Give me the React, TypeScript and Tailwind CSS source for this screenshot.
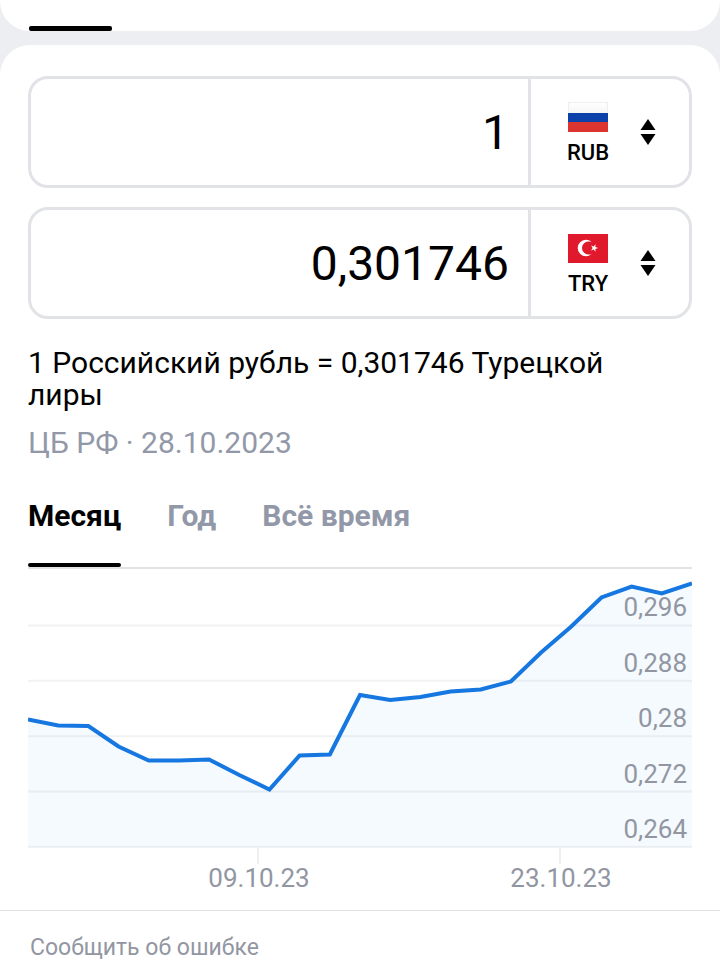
import { useState, type ReactNode } from "react";

const rates = [
  0.28242, 0.28155, 0.28148, 0.27852, 0.2765, 0.2765, 0.27664, 0.2744, 0.27231, 0.27722, 0.27736, 0.28596,
  0.28524, 0.28567, 0.28647, 0.28675, 0.28791, 0.2921, 0.29586, 0.30005, 0.30163, 0.30062, 0.30207,
];

const periods = ["Месяц", "Год", "Всё время"];

const gridValues = [0.296, 0.288, 0.28, 0.272, 0.264];

const dateTicks = [
  { x: 230, label: "09.10.23" },
  { x: 532, label: "23.10.23" },
];

const CHART_WIDTH = 664;
const CHART_BOTTOM = 278;

function rateToY(rate: number) {
  return CHART_BOTTOM - (rate - 0.264) * 6922;
}

function RussianFlag() {
  return (
    <svg viewBox="0 0 40 30" className="h-[30px] w-10" aria-hidden="true">
      <defs>
        <linearGradient id="ru-white" x1="0" y1="0" x2="0" y2="1">
          <stop offset="0" stopColor="#ffffff" />
          <stop offset="1" stopColor="#e4e6ea" />
        </linearGradient>
      </defs>
      <rect x="0.5" y="0.5" width="39" height="29" fill="url(#ru-white)" stroke="#eeeff1" />
      <rect y="11" width="40" height="9" fill="#0b41a8" />
      <rect y="20" width="40" height="10" fill="#dc352f" />
    </svg>
  );
}

function TurkishFlag() {
  return (
    <svg viewBox="0 0 40 30" className="h-[30px] w-10" aria-hidden="true">
      <rect y="1" width="40" height="29" fill="#e01a2c" />
      <path d="M23.6 9.1 A8.2 8.2 0 1 0 23.6 20.9 A6.6 6.6 0 1 1 23.6 9.1 Z" fill="#fff" />
      <path d="M30 15l-2.6 1 .1 2.8-1.8-2.2-2.6.8 1.5-2.4-1.5-2.4 2.6.8 1.8-2.2-.1 2.8z" fill="#fff" />
    </svg>
  );
}

function CurrencyRow({
  id,
  label,
  value,
  code,
  flag,
}: {
  id: string;
  label: string;
  value: string;
  code: string;
  flag: ReactNode;
}) {
  return (
    <div className="flex h-28 overflow-hidden rounded-[20px] border-3 border-[#e2e3e7]">
      <input
        id={`${id}-amount`}
        type="text"
        inputMode="decimal"
        aria-label={label}
        defaultValue={value}
        className="min-w-0 flex-1 bg-transparent pr-[19px] text-right text-5xl text-black outline-none"
      />
      <div className="grid w-[161px] border-l-3 border-[#e2e3e7]">
        <select
          aria-label={`${label}: валюта`}
          defaultValue={code}
          className="col-start-1 row-start-1 appearance-none bg-transparent pt-10 pr-11 text-[22px] font-medium text-black outline-none [text-align-last:center]"
        >
          <option>{code}</option>
        </select>
        <div className="pointer-events-none col-start-1 row-start-1 flex items-center justify-between pr-[33px] pl-[37px]">
          <div className="mb-[30px]">{flag}</div>
          <svg viewBox="0 0 16 26" className="h-[26px] w-4" aria-hidden="true">
            <path d="M8 0l7.5 11H.5zM8 26l7.5-11H.5z" />
          </svg>
        </div>
      </div>
    </div>
  );
}

function RateChart() {
  const step = CHART_WIDTH / (rates.length - 1);
  const points = rates.map((rate, i) => `${i * step},${rateToY(rate)}`).join(" ");

  return (
    <svg viewBox="0 0 664 326" className="block w-full" role="img" aria-label="Курс рубля к турецкой лире">
      <polygon points={`0,${CHART_BOTTOM} ${points} ${CHART_WIDTH},${CHART_BOTTOM}`} fill="#f4fafe" />
      {gridValues.map((value) => (
        <line
          key={value}
          x1="0"
          x2={CHART_WIDTH}
          y1={rateToY(value)}
          y2={rateToY(value)}
          stroke="#737d91"
          strokeOpacity="0.1"
          strokeWidth="2"
        />
      ))}
      {dateTicks.map((tick) => (
        <g key={tick.label}>
          <line x1={tick.x} x2={tick.x} y1="277" y2="295" stroke="#eeeff2" strokeWidth="2" />
          <text x={tick.x + 1} y="318" textAnchor="middle" className="fill-[#9296a2] text-[26px]">
            {tick.label}
          </text>
        </g>
      ))}
      <polyline points={points} fill="none" stroke="#1677e0" strokeWidth="4" />
      {gridValues.map((value) => (
        <text key={value} x="659" y={rateToY(value) - 9} textAnchor="end" className="fill-[#9296a2] text-[26px]">
          {String(value).replace(".", ",")}
        </text>
      ))}
    </svg>
  );
}

export default function App() {
  const [period, setPeriod] = useState(periods[0]);

  return (
    <div className="flex min-h-screen flex-col bg-[#edeef2] font-[Roboto,sans-serif] text-black">
      <header className="flex h-[31px] items-end rounded-b-[30px] bg-white px-[29px]">
        <div className="h-[5px] w-[83px] rounded-xs bg-black" />
      </header>

      <main className="mt-[14px] flex-1 rounded-t-[30px] bg-white">
        <div className="px-7 pt-[31px]">
          <div className="flex flex-col gap-[19px]">
            <CurrencyRow id="from" label="Российский рубль" value="1" code="RUB" flag={<RussianFlag />} />
            <CurrencyRow id="to" label="Турецкая лира" value="0,301746" code="TRY" flag={<TurkishFlag />} />
          </div>

          <p className="mt-7 pr-7 text-[30px] leading-8">1 Российский рубль = 0,301746 Турецкой лиры</p>
          <p className="mt-4 text-[30px] leading-8 text-[#9298a8]">ЦБ РФ · 28.10.2023</p>

          <div role="tablist" className="mt-[27px] flex gap-[46px] border-b-2 border-[#e3e3e5]">
            {periods.map((item) => (
              <button
                key={item}
                type="button"
                role="tab"
                aria-selected={item === period}
                onClick={() => setPeriod(item)}
                className={
                  item === period
                    ? "flex flex-col text-[30px] leading-[60px] font-bold text-black"
                    : "flex flex-col text-[30px] leading-[60px] font-bold text-[#9298a8]"
                }
              >
                {item}
                <span className={item === period ? "mt-[17px] h-1 w-full rounded-xs bg-black" : "mt-[17px] h-1 w-full"} />
              </button>
            ))}
          </div>

          <RateChart />
        </div>

        <footer className="mt-[15px] border-t border-[#e0e1e4] px-[30px] pt-6">
          <a href="#report" className="block text-[23px] leading-[25px] text-[#9296a2]">
            Сообщить об ошибке
          </a>
        </footer>
      </main>
    </div>
  );
}
